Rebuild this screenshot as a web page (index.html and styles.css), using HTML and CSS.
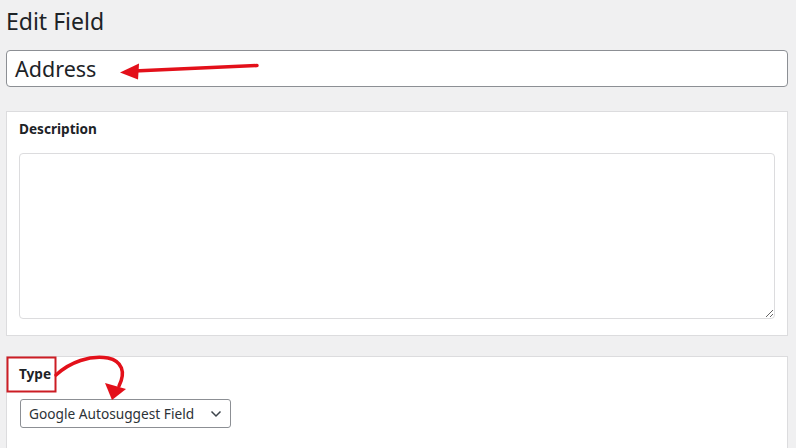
FILE: index.html
```html
<!DOCTYPE html>
<html>
<head>
<meta charset="utf-8">
<link rel="stylesheet" href="styles.css">
</head>
<body>
<div class="page">
  <h1 class="title">Edit Field</h1>
  <div class="name-input">Address</div>
  <div class="box box-desc">
    <div class="label">Description</div>
    <textarea class="textarea"></textarea>
  </div>
  <div class="box box-type">
    <div class="label">Type</div>
    <div class="select">
      <span>Google Autosuggest Field</span>
      <svg class="chev" width="12" height="8" viewBox="0 0 12 8"><path d="M1.5 1.5 L6 6 L10.5 1.5" fill="none" stroke="#3c434a" stroke-width="1.5"/></svg>
    </div>
  </div>
  <svg class="annot" width="796" height="448" viewBox="0 0 796 448">
    <line x1="257" y1="65.5" x2="134" y2="71" stroke="#e3101a" stroke-width="3.5" stroke-linecap="round"/>
    <polygon points="120,72.5 139,63.5 138,79.5" fill="#e3101a"/>
    <rect x="7.5" y="357.5" width="48" height="34" fill="none" stroke="#cc1d24" stroke-width="2"/>
    <path d="M56,375 C70,362 90,355 108,358 C122,361 126,372 119,386" fill="none" stroke="#e3101a" stroke-width="3.5" stroke-linecap="round"/>
    <polygon points="112,400 105,383 126,389" fill="#e3101a"/>
  </svg>
</div>
</body>
</html>
```
FILE: styles.css
```css
html, body {
  margin: 0;
  padding: 0;
  background: #f0f0f1;
  font-family: "Noto Sans", "Open Sans", sans-serif;
  color: #1d2327;
  overflow: hidden;
}
.page {
  position: relative;
  width: 796px;
  height: 448px;
  padding: 6px 8px 0 6px;
  box-sizing: border-box;
}
.title {
  margin: 0;
  font-size: 23px;
  font-weight: 400;
  line-height: 30px;
  height: 44px;
}
.name-input {
  height: 37px;
  box-sizing: border-box;
  border: 1px solid #8c8f94;
  border-radius: 4px;
  background: #fff;
  font-size: 21.5px;
  line-height: 35px;
  padding: 0 8px;
}
.box {
  background: #fff;
  border: 1px solid #dcdcde;
  box-sizing: border-box;
  padding: 7px 12px 16px 12px;
}
.box-desc {
  margin-top: 24px;
  height: 225px;
}
.box-type {
  margin-top: 20px;
  height: 92px;
  border-bottom: none;
  padding-bottom: 0;
}
.label {
  font-size: 13.6px;
  font-weight: 700;
  line-height: 20px;
  height: 20px;
}
.textarea {
  display: block;
  margin-top: 14px;
  width: 100%;
  height: 166px;
  box-sizing: border-box;
  border: 1px solid #dcdcde;
  border-radius: 4px;
  background: #fff;
  resize: both;
}
.select {
  margin-top: 15px;
  margin-left: 1px;
  width: 211px;
  height: 29px;
  box-sizing: border-box;
  border: 1px solid #8c8f94;
  border-radius: 3px;
  display: flex;
  align-items: center;
  justify-content: space-between;
  padding: 0 8px 0 8px;
  font-size: 13.7px;
  color: #2c3338;
}
.chev {
  display: block;
}
.annot {
  position: absolute;
  left: 0;
  top: 0;
  pointer-events: none;
}
```
